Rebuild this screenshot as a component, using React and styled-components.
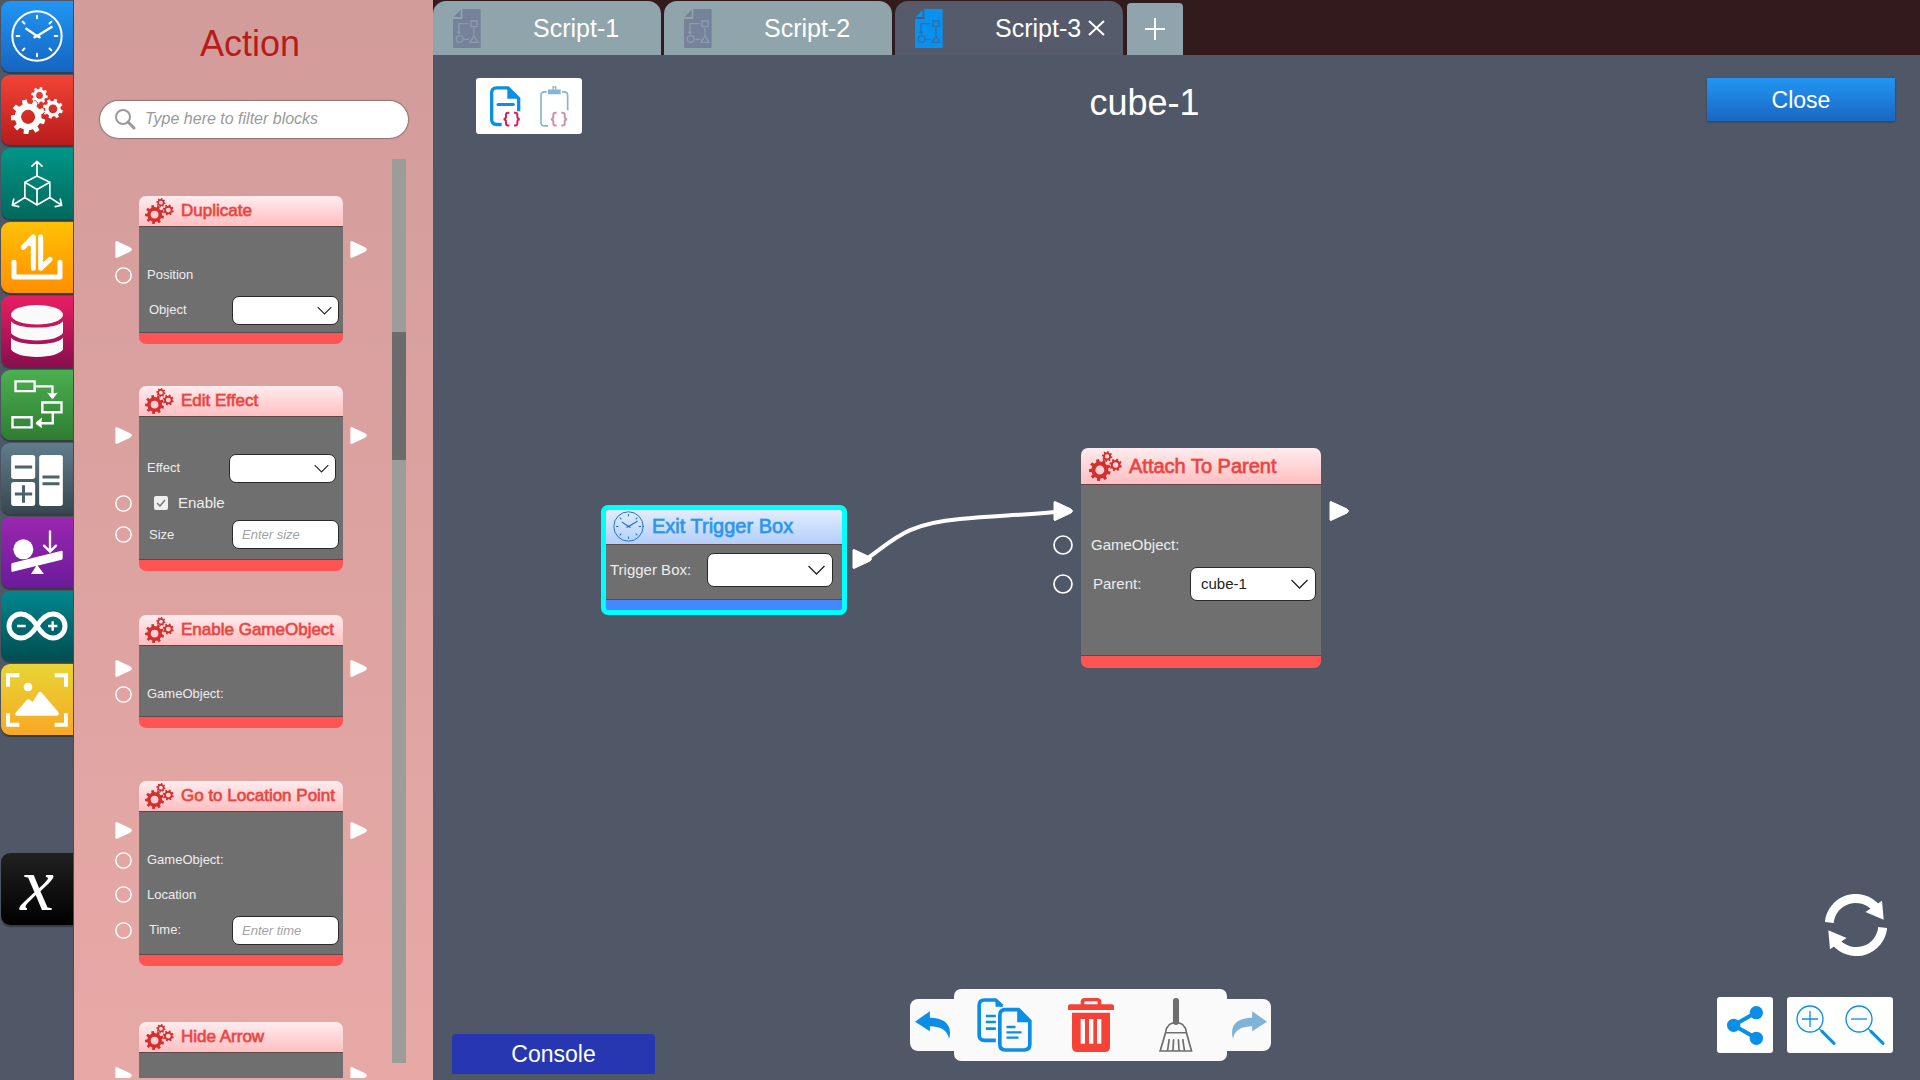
import React from 'react';
import styled, { createGlobalStyle, css } from 'styled-components';

const GlobalStyle = createGlobalStyle`
    * {
        box-sizing: border-box;
    }

    body {
        margin: 0;
        background: #505766;
        font-family: "Liberation Sans", Arial, sans-serif;
        color: #fff;
    }

    button, input, select {
        font-family: inherit;
        margin: 0;
    }

    button {
        border: 0;
        padding: 0;
        background: none;
        color: inherit;
        cursor: pointer;
    }

    svg {
        display: block;
        flex: none;
    }
`;

const Shell = styled.div`
    display: flex;
    height: 100vh;
    overflow: hidden;
`;

/* category rail */

const Rail = styled.nav`
    width: 74px;
    flex: none;
    padding: 1px 0 0 1px;
    border-right: 1px solid #4d4a57;
`;
const RailGroup = styled.div`
    display: flex;
    flex-direction: column;
    gap: 3px;
    height: 734px;
`;
const RailButton = styled.button`
    flex: 1;
    width: 100%;
    min-height: 0;
    display: flex;
    align-items: center;
    justify-content: center;
    border-radius: 9px 0 0 9px;
    background: linear-gradient(${({ $from, $to }) => `${$from}, ${$to}`});
    box-shadow: 0 2px 1px #363b47;
`;
const VariableButton = styled(RailButton)`
    height: 72px;
    margin-top: 118px;
    font: italic 76px/48px "Liberation Serif", serif;
    padding-bottom: 10px;
`;

/* block library */

const Panel = styled.aside`
    width: 359px;
    flex: none;
    display: flex;
    flex-direction: column;
    background: linear-gradient(#d29c9b, #e7a9a6);
`;
const PanelTitle = styled.h1`
    margin: 0;
    padding: 0 31px 0 24px;
    font-size: 36px;
    font-weight: 400;
    line-height: 88px;
    text-align: center;
    color: #b71c1c;
`;
const Search = styled.label`
    display: flex;
    align-items: center;
    gap: 9px;
    height: 37px;
    margin: 13px 25px 21px 26px;
    padding: 0 15px;
    border-radius: 19px;
    background: #fff;
    box-shadow: 0 0 1px 1px #8d7474;
`;
const SearchInput = styled.input`
    flex: 1;
    min-width: 0;
    border: 0;
    padding: 0 0 2px;
    outline: 0;
    background: none;
    font-size: 16px;

    &::placeholder {
        color: #9a9a9a;
        font-style: italic;
    }
`;
const LibraryArea = styled.div`
    flex: 1;
    min-height: 0;
    display: flex;
    margin-bottom: 2px;
`;
const BlockList = styled.div`
    width: 318px;
    padding: 37px 0 0 65px;
    overflow: hidden;
`;
const ScrollTrack = styled.div`
    width: 14px;
    margin-bottom: 15px;
    padding-top: 173px;
    background: #9c9c9b;
`;
const ScrollThumb = styled.div`
    height: 128px;
    background: #6b6b6b;
`;

/* blocks */

const small = css`
    --width: 204px;
    --header: 31px;
    --foot: 12px;
    --title: 17px;
    --icon: 29px;
    --inset: 6px;
    --label: 13px;
    --port: 17px;
    --slot: 24px;
    --field-width: 107px;
    --field-height: 29px;
    --field-pad: 9px;
    --chevron: 17px;
`;
const large = css`
    --width: 240px;
    --header: 37px;
    --foot: 13px;
    --title: 20px;
    --icon: 33px;
    --inset: 8px;
    --label: 15px;
    --port: 20px;
    --slot: 28px;
    --field-width: 126px;
    --field-height: 34px;
    --field-pad: 10px;
    --chevron: 19px;
`;
const BlockCard = styled.section`
    ${({ $large }) => ($large ? large : small)}
    width: var(--width);
    margin-bottom: ${({ $gap }) => $gap || 0}px;
    ${({ $selected }) => $selected && css`
        outline: 5px solid #00ffff;
        outline-offset: -2px;
        border-radius: 4px;
    `}
`;
const BlockHeader = styled.header`
    display: flex;
    align-items: center;
    gap: 7px;
    height: var(--header);
    padding-left: var(--inset);
    border-radius: 7px 7px 0 0;
    border-bottom: 1px solid #5a4a4a;
    background: ${({ $tone }) =>
        $tone === 'blue' ? 'linear-gradient(#e4effe, #b4cffb)' : 'linear-gradient(#ffecee, #ffbfc1)'};
    color: ${({ $tone }) => ($tone === 'blue' ? '#2b95ee' : '#ea4440')};
`;
const IconSlot = styled.span`
    width: var(--icon);
    display: flex;
    justify-content: center;
`;
const BlockTitle = styled.h2`
    margin: 0;
    font-size: var(--title);
    font-weight: 400;
    line-height: 24px;
    white-space: nowrap;
    -webkit-text-stroke: 1px ${({ $tone }) =>
        $tone === 'blue' ? 'rgba(43, 149, 238, 0.7)' : 'rgba(234, 68, 64, 0.7)'};
`;
const BlockBody = styled.div`
    padding: ${({ $top }) => $top}px 0 ${({ $bottom }) => $bottom}px;
    background: #6f6f6f;
`;
const BlockFoot = styled.div`
    height: var(--foot);
    border-top: 1px solid #5a4a4a;
    border-radius: 0 0 7px 7px;
    background: ${({ $tone }) => ($tone === 'blue' ? '#4488ff' : '#ff5454')};
`;
const Row = styled.div`
    display: flex;
    align-items: center;
    height: ${({ $height }) => $height}px;
    margin: 0 calc(var(--slot) * -1);
`;
const Slot = styled.span`
    width: var(--slot);
    flex: none;
    display: flex;
    justify-content: ${({ $out }) => ($out ? 'flex-end' : 'flex-start')};
    margin-left: ${({ $out }) => ($out ? 'auto' : '0')};
    align-self: ${({ $raised }) => ($raised ? 'flex-start' : 'center')};
    padding-top: ${({ $raised }) => ($raised ? '4px' : '0')};
`;
const PortSvg = styled.svg`
    width: var(--port);
    height: var(--port);
`;
const Label = styled.label`
    padding-left: ${({ $indent }) => $indent || 8}px;
    font-size: var(--label);
    line-height: 18px;
    color: #ededed;
    white-space: nowrap;
`;
const Field = styled.span`
    position: relative;
    width: var(--field-width);
    height: var(--field-height);
    margin-left: auto;
    margin-right: ${({ $end }) => $end || 4}px;

    & + ${Slot} {
        margin-left: 0;
    }
`;
const fieldBox = css`
    display: block;
    width: 100%;
    height: 100%;
    padding: 0 var(--field-pad);
    border: 1px solid #2a2a2a;
    border-radius: 7px;
    outline: 0;
    background: #fff;
    color: #222;
    font-size: var(--label);
`;
const Select = styled.select`
    ${fieldBox}
    appearance: none;
`;
const TextInput = styled.input`
    ${fieldBox}

    &::placeholder {
        color: #a2a2a2;
        font-style: italic;
    }
`;
const Chevron = styled.svg`
    position: absolute;
    right: calc(var(--field-pad) - 3px);
    top: 0;
    height: 100%;
    width: var(--chevron);
    pointer-events: none;
`;
const CheckLabel = styled.label`
    position: relative;
    display: flex;
    align-items: center;
    gap: 10px;
    padding-left: 15px;
    font-size: 15px;
    line-height: 18px;
    color: #ededed;

    svg {
        position: absolute;
        left: 17px;
    }
`;
const Checkbox = styled.input`
    appearance: none;
    width: 14px;
    height: 14px;
    border-radius: 2px;
    background: #efefef;
`;

/* workspace */

const Workspace = styled.main`
    flex: 1;
    min-width: 0;
    display: flex;
    flex-direction: column;
`;
const TabBar = styled.div`
    display: flex;
    align-items: flex-end;
    gap: 3px;
    height: 55px;
    flex: none;
    background: #331b1d;
`;
const Tab = styled.div`
    display: flex;
    align-items: center;
    width: 228px;
    height: 54px;
    padding: 0 18px 0 20px;
    border-radius: 13px 13px 0 0;
    background: ${({ $active }) => ($active ? '#555b6b' : '#90a4ab')};
`;
const TabName = styled.button`
    margin: 0 auto 0 52px;
    font-size: 25px;
    line-height: 28px;
`;
const AddTab = styled.button`
    display: flex;
    align-items: center;
    justify-content: center;
    width: 56px;
    height: 52px;
    margin-left: 1px;
    border-radius: 4px 4px 0 0;
    background: #90a4ae;
`;
const Canvas = styled.div`
    position: relative;
    flex: 1;
    display: flex;
    flex-direction: column;
    justify-content: space-between;
    background: #505766;
`;
const NodeLayer = styled.div`
    position: absolute;
    inset: 0;
`;
const NodeSpot = styled.div`
    position: absolute;
    left: ${({ $x }) => $x}px;
    top: ${({ $y }) => $y}px;
`;
const Wires = styled.svg`
    position: absolute;
    inset: 0;
    width: 100%;
    height: 100%;
`;
const TopRow = styled.div`
    position: relative;
    display: flex;
    align-items: flex-start;
    justify-content: space-between;
    padding: 23px 25px 0 43px;
`;
const IconBox = styled.div`
    display: flex;
    align-items: center;
    justify-content: space-around;
    width: ${({ $width }) => $width}px;
    height: 56px;
    padding: 0 4px;
    border-radius: 3px;
    background: #fff;
`;
const ScriptTitle = styled.h2`
    margin: 0;
    font-size: 36px;
    font-weight: 400;
    line-height: 50px;
`;
const CloseButton = styled.button`
    width: 188px;
    height: 43px;
    padding-top: 2px;
    background: linear-gradient(#2196f3, #1a67c2);
    box-shadow: 0 1px 2px #27415f;
    font-size: 23px;
`;
const BottomRow = styled.div`
    position: relative;
    display: flex;
    align-items: flex-end;
    padding: 0 27px 0 19px;
`;
const ConsoleButton = styled.button`
    width: 203px;
    height: 40px;
    margin-bottom: 6px;
    border-radius: 4px 4px 0 0;
    background: #2736b1;
    font-size: 23px;
`;
const EditBar = styled.div`
    display: flex;
    align-items: center;
    margin: 0 auto 19px 255px;
`;
const EditMain = styled.div`
    display: flex;
    width: 273px;
    height: 72px;
    padding: 0 8px;
    border-radius: 7px;
    background: #fafafa;
`;
const EditButton = styled.button`
    flex: 1;
    display: flex;
    align-items: center;
    justify-content: center;
`;
const EditSide = styled.button`
    display: flex;
    align-items: center;
    justify-content: center;
    width: 44px;
    height: 52px;
    border-radius: ${({ $right }) => ($right ? '0 8px 8px 0' : '8px 0 0 8px')};
    background: #fafafa;
`;
const ViewTools = styled.div`
    display: flex;
    flex-direction: column;
    align-items: flex-end;
    gap: 41px;
    margin-bottom: 27px;
`;
const SyncButton = styled.button`
    margin-right: 6px;
`;
const ViewBoxes = styled.div`
    display: flex;
    gap: 14px;
`;

/* icons */

const gearPath = (cx, cy, r, teeth, hole, turn = 0) => {
    const step = (Math.PI * 2) / teeth;
    const root = r * 0.77;
    const at = (radius, angle) =>
        `${(cx + radius * Math.cos(angle)).toFixed(1)} ${(cy + radius * Math.sin(angle)).toFixed(1)}`;
    let d = '';
    for (let i = 0; i < teeth; i++) {
        const a = turn + i * step;
        d += `${i ? 'L' : 'M'}${at(root, a - step * 0.28)}L${at(r, a - step * 0.2)}L${at(r, a + step * 0.2)}L${at(root, a + step * 0.28)}`;
    }
    return `${d}ZM${cx - hole} ${cy}a${hole} ${hole} 0 1 0 ${hole * 2} 0a${hole} ${hole} 0 1 0 ${-hole * 2} 0Z`;
};
const gears = [
    gearPath(51, 89, 52, 9, 21, 0.3),
    gearPath(85, 25, 25, 8, 10, 0.2),
    gearPath(125, 65, 30, 8, 13, 0.3),
].join('');

const GearsIcon = ({ width, color = '#fff' }) => (
    <svg width={width} height={Math.round(width * 0.9)} viewBox="0 0 155 140">
        <path d={gears} fill={color} fillRule="evenodd" />
    </svg>
);

const ClockIcon = ({ size, color = '#fff', weight = 6 }) => (
    <svg width={size} height={size} viewBox="0 0 156 156" fill="none" stroke={color} strokeWidth={weight} strokeLinecap="round">
        <circle cx="78" cy="78" r="74" />
        {[0, 45, 90, 135, 180, 225, 270, 315].map((a) => (
            <path key={a} d="M78 17v8" transform={`rotate(${a} 78 78)`} />
        ))}
        <path d="M46 56l32 22 44-27M70 82l8-4 8 4" strokeWidth={weight + 1} />
    </svg>
);

const AxesIcon = () => (
    <svg width="52" height="48" viewBox="0 0 154 142" fill="none" stroke="#fff" strokeWidth="5" strokeLinecap="round" strokeLinejoin="round">
        <path d="M77 47l38 19v45l-38 22-36-22V66zM41 66l36 21 38-21M77 87v46M77 47V4M62 18L77 4l15 14M41 111L4 134M8 116l-4 18 19 4M115 111l35 23M146 116l4 18-19 4" />
    </svg>
);
const TransferIcon = () => (
    <svg width="52" height="46" viewBox="0 0 156 138" fill="none" stroke="#fff" strokeWidth="15" strokeLinecap="round" strokeLinejoin="round">
        <path d="M9 85v44h138V85" />
        <path d="M37 40L67 9v94M89 9v94l28-27" />
        <path d="M56 22v10l8 0" strokeWidth="8" />
    </svg>
);
const DatabaseIcon = () => (
    <svg width="52" height="52" viewBox="0 0 154 154" fill="#fafafa">
        <ellipse cx="77" cy="29" rx="77" ry="29" />
        <path d="M0 48q16 18 77 19 61-1 77-19v35q-16 21-77 22-61-1-77-22z" />
        <path d="M0 97q16 18 77 19 61-1 77-19v35q-16 21-77 22-61-1-77-22z" />
    </svg>
);
const FlowIcon = () => (
    <svg width="52" height="49" viewBox="0 0 154 146">
        <g fill="none" stroke="#fff" strokeWidth="7">
            <path d="M13 4h57v29H13zM93 67h57v29H93zM4 111h57v30H4zM70 19h53v26M124 98v31H82" />
        </g>
        <path d="M107 37q16 6 32 0l-14 19h-4zM92 112q-4 16 0 32l-18-13v-5z" fill="#fff" />
    </svg>
);
const CalcIcon = () => (
    <svg width="52" height="55" viewBox="0 -12 155 165">
        <g fill="#fff">
            <rect width="72" height="72" rx="8" />
            <rect y="81" width="72" height="72" rx="8" />
            <rect x="84" width="71" height="153" rx="8" />
        </g>
        <path d="M11 36h52M94 66h51M94 86h51M11 117h52M37 91v52" stroke="#4c626d" strokeWidth="9" />
    </svg>
);
const BalanceIcon = () => (
    <svg width="52" height="44" viewBox="0 0 154 132" fill="#fff">
        <circle cx="36" cy="58" r="30" />
        <path d="M3 99L151 62q3 0 3 3v20q0 3-3 4L4 125q-4 1-4-3v-19q0-3 3-4zM77 104l21 28H59z" />
        <path d="M116 4v58M98 47l18 18 18-18" fill="none" stroke="#fff" strokeWidth="7" strokeLinecap="round" />
    </svg>
);
const InfinityIcon = () => (
    <svg width="62" height="30" viewBox="0 0 186 90" fill="none" stroke="#fff" strokeWidth="15">
        <path d="M93 45C80 24 66 9 45 9a36 36 0 0 0 0 72c21 0 35-15 48-36s27-36 48-36a36 36 0 0 1 0 72c-21 0-35-15-48-36z" />
        <path d="M33 45h26M126 45h28M140 31v28" strokeWidth="7" />
    </svg>
);
const PictureIcon = () => (
    <svg width="62" height="54" viewBox="0 0 186 160" fill="#fff">
        <path d="M6 40V6h34M146 6h34v34M6 120v34h34M146 154h34v-34" fill="none" stroke="#fff" strokeWidth="12" />
        <circle cx="66" cy="41" r="13" />
        <path d="M29 118l33-38q5-5 11 0l7 6 17-27q5-7 11 0l49 57q5 10-5 11H34q-10-1-5-9z" />
    </svg>
);
const SearchIcon = () => (
    <svg width="21" height="21" viewBox="0 0 21 21" fill="none" stroke="#9a9a9a">
        <circle cx="8" cy="8" r="7" strokeWidth="2" />
        <path d="M13 13l6 6" strokeWidth="3" strokeLinecap="round" />
    </svg>
);
const ArrowPort = () => (
    <PortSvg viewBox="0 0 20 20">
        <path d="M1 1q0-1 2 0l15 7q3 2 0 4L3 19q-2 1-2 0z" fill="#fff" stroke="#fff" />
    </PortSvg>
);
const DataPort = () => (
    <PortSvg viewBox="0 0 20 20">
        <circle cx="10" cy="10" r="9" fill="none" stroke="#fff" strokeWidth="1.7" />
    </PortSvg>
);
const ScriptIcon = ({ color, line }) => (
    <svg width="28" height="39" viewBox="0 0 84 117">
        <path d="M28 0h52q3 0 3 3v111q0 3-3 3H4q-4 0-4-4V30h28zM23 2v22H2z" fill={color} />
        <g fill="none" stroke={line} strokeWidth="4">
            <path d="M18 74V44h28M54 36h18v17H54zM63 56v20M34 91h14" />
            <circle cx="20" cy="90" r="10" />
            <path d="M63 80l12 20H51z" />
            <path d="M12 68h12l-6 8z" fill={line} strokeWidth="1" />
        </g>
    </svg>
);
const CrossIcon = () => (
    <svg width="17" height="16" viewBox="0 0 17 16" stroke="#fff" strokeWidth="2">
        <path d="M1 1l15 14M16 1L1 15" />
    </svg>
);
const PlusIcon = () => (
    <svg width="20" height="22" viewBox="0 0 20 22" stroke="#fff" strokeWidth="2">
        <path d="M0 11h20M10 0v22" />
    </svg>
);
const Braces = ({ x, color }) => (
    <path
        transform={`translate(${x} 78)`}
        d="M20 2h-4q-6 0-6 6v5q0 7-7 8 7 1 7 8v5q0 6 6 6h4M34 2h4q6 0 6 6v5q0 7 7 8-7 1-7 8v5q0 6-6 6h-4"
        fill="none"
        stroke={color}
        strokeWidth="6"
    />
);
const CopyCodeIcon = () => (
    <svg width="31" height="41" viewBox="0 0 93 122">
        <path d="M35 115H20Q5 115 5 100V20Q5 5 20 5h34l32 32v38" fill="none" stroke="#0b8fe6" strokeWidth="10" />
        <path d="M52 3v35h37z" fill="#0b8fe6" />
        <path d="M24 55h46" stroke="#0b8fe6" strokeWidth="9" strokeLinecap="round" />
        <Braces x={38} color="#d81b60" />
    </svg>
);
const PasteCodeIcon = () => (
    <svg width="29" height="41" viewBox="0 0 87 122">
        <path d="M20 17h-6Q3 17 3 28v80q0 11 11 11h10M66 17h6q11 0 11 11v44" fill="none" stroke="#84b4d6" strokeWidth="5" />
        <path d="M24 10h13V0h12v10h13v14H24zM41 4v6h4V4z" fill="#84b4d6" fillRule="evenodd" />
        <Braces x={30} color="#d190a8" />
    </svg>
);
const UndoIcon = ({ color = '#0b8fe6', flip }) => (
    <svg width="35" height="28" viewBox="0 0 106 84">
        <path
            d="M0 32L45 0v20c38 0 61 16 61 45q0 10-3 19C98 58 80 47 45 46v15z"
            fill={color}
            transform={flip ? 'translate(106 0) scale(-1 1)' : undefined}
        />
    </svg>
);
const CopyIcon = () => (
    <svg width="55" height="54" viewBox="0 0 164 162">
        <g fill="none" stroke="#0b8fe6" strokeWidth="11">
            <path d="M56 127H22Q6 127 6 111V22Q6 6 22 6h33l20 18" />
            <path d="M26 54h30M26 72h30M26 92h30" strokeWidth="8" />
            <path d="M84 35h40l34 34v70q0 17-17 17H84q-16 0-16-17V52q0-17 16-17z" />
            <path d="M88 87h27M88 103h45M88 119h36" strokeWidth="7" />
        </g>
        <path d="M55 2v24h24zM120 33v40h40z" fill="#0b8fe6" />
    </svg>
);
const TrashIcon = () => (
    <svg width="46" height="54" viewBox="0 0 138 162">
        <path d="M0 24q0-5 6-5h32V10Q40 0 50 0h38q10 0 12 10v9h32q6 0 6 5v12H0zM49 19h40v-7q0-2-3-2H52q-3 0-3 2z" fill="#f44336" fillRule="evenodd" />
        <path d="M12 44h114v102q0 16-16 16H28q-16 0-16-16zM38 63v74h13V63zM63 63v74h13V63zM87 63v74h13V63z" fill="#f44336" fillRule="evenodd" />
    </svg>
);
const BroomIcon = () => (
    <svg width="34" height="54" viewBox="0 0 100 160" fill="none" stroke="#6e6e6e" strokeWidth="5">
        <path d="M50 9v62" strokeWidth="18" strokeLinecap="round" />
        <path d="M19 103q3-30 31-30t31 30l15 54H3zM18 103h64M30 122l-5 34M43 122l-2 34M57 122l2 34M70 122l5 34" />
    </svg>
);
const SyncIcon = () => (
    <svg width="62" height="62" viewBox="0 0 187 187">
        {[0, 180].map((turn) => (
            <g key={turn} transform={`rotate(${turn} 93.5 93.5)`}>
                <path d="M13 86A80 80 0 0 1 154 42" fill="none" stroke="#fff" strokeWidth="27" />
                <path d="M177 78l-5-58-50 34z" fill="#fff" />
            </g>
        ))}
    </svg>
);
const ShareIcon = () => (
    <svg width="36" height="39" viewBox="0 0 108 117" fill="#0b8fe6">
        <path d="M88 19L20 58l68 39" fill="none" stroke="#0b8fe6" strokeWidth="12" />
        <circle cx="88" cy="20" r="20" />
        <circle cx="20" cy="58" r="20" />
        <circle cx="88" cy="97" r="20" />
    </svg>
);
const ZoomIcon = ({ plus }) => (
    <svg width="40" height="40" viewBox="0 0 120 120" fill="none" stroke="#0b8fe6" strokeWidth="4">
        <circle cx="42" cy="42" r="39" />
        <path d={plus ? 'M18 42h48M42 18v48' : 'M18 42h48'} />
        <path d="M70 71l11 12" />
        <path d="M78 79l36 36" strokeWidth="9" strokeLinecap="round" />
    </svg>
);

/* block parts */

const ExecRow = () => (
    <Row $height={26}>
        <Slot><ArrowPort /></Slot>
        <Slot $out><ArrowPort /></Slot>
    </Row>
);

const SelectField = ({ id, end, options = [''] }) => (
    <Field $end={end}>
        <Select id={id}>
            {options.map((o) => <option key={o}>{o}</option>)}
        </Select>
        <Chevron viewBox="0 0 18 34" fill="none" stroke="#222" strokeWidth="1.3">
            <path d="M1 13l8 8 8-8" />
        </Chevron>
    </Field>
);

const PortRow = ({ height, label, id, indent, port = true, children }) => (
    <Row $height={height}>
        <Slot>{port && <DataPort />}</Slot>
        {label && <Label as={id ? 'label' : 'span'} htmlFor={id} $indent={indent}>{label}</Label>}
        {children}
        <Slot $out />
    </Row>
);

const Block = ({ title, tone = 'red', isLarge, gap, selected, top, bottom, children }) => (
    <BlockCard $large={isLarge} $gap={gap} $selected={selected}>
        <BlockHeader $tone={tone}>
            <IconSlot>
                {tone === 'blue'
                    ? <ClockIcon size={31} color="#1f73c9" weight={5} />
                    : <GearsIcon width={isLarge ? 33 : 29} color="#d32f2f" />}
            </IconSlot>
            <BlockTitle $tone={tone}>{title}</BlockTitle>
        </BlockHeader>
        <BlockBody $top={top} $bottom={bottom}>{children}</BlockBody>
        <BlockFoot $tone={tone} />
    </BlockCard>
);

const categories = [
    { name: 'Event', from: '#2196f3', to: '#1565c0', icon: <ClockIcon size={52} /> },
    { name: 'Action', from: '#f44336', to: '#b71c1c', icon: <GearsIcon width={52} /> },
    { name: 'Transform', from: '#009688', to: '#00695c', icon: <AxesIcon /> },
    { name: 'Input and output', from: '#ffc107', to: '#ff8f00', icon: <TransferIcon /> },
    { name: 'Data', from: '#e91e63', to: '#880e4f', icon: <DatabaseIcon /> },
    { name: 'Flow', from: '#4caf50', to: '#2e7d32', icon: <FlowIcon /> },
    { name: 'Math', from: '#607d8b', to: '#37474f', icon: <CalcIcon /> },
    { name: 'Physics', from: '#9c27b0', to: '#6a1b9a', icon: <BalanceIcon /> },
    { name: 'Arduino', from: '#00878f', to: '#004d50', icon: <InfinityIcon /> },
    { name: 'Image', from: '#e6d634', to: '#f9a825', icon: <PictureIcon /> },
];

const tabs = ['Script-1', 'Script-2', 'Script-3'];

function Library() {
    return (
        <LibraryArea>
            <BlockList>
                <Block title="Duplicate" gap={42} top={9} bottom={0}>
                    <ExecRow />
                    <PortRow height={26} label="Position" />
                    <PortRow height={44} label="Object" id="object" indent={10} port={false}>
                        <SelectField id="object" />
                    </PortRow>
                </Block>
                <Block title="Edit Effect" gap={44} top={5} bottom={8}>
                    <ExecRow />
                    <PortRow height={40} label="Effect" id="effect" port={false}>
                        <SelectField id="effect" end={7} />
                    </PortRow>
                    <PortRow height={30}>
                        <CheckLabel>
                            <Checkbox type="checkbox" defaultChecked />
                            <svg width="10" height="8" viewBox="0 0 10 8" fill="none" stroke="#777" strokeWidth="1.5">
                                <path d="M1 4l3 3 5-6" />
                            </svg>
                            Enable
                        </CheckLabel>
                    </PortRow>
                    <PortRow height={33} label="Size" id="size" indent={10}>
                        <Field><TextInput id="size" placeholder="Enter size" /></Field>
                    </PortRow>
                </Block>
                <Block title="Enable GameObject" gap={53} top={9} bottom={9}>
                    <ExecRow />
                    <PortRow height={26} label="GameObject:" />
                </Block>
                <Block title="Go to Location Point" gap={56} top={5} bottom={6}>
                    <ExecRow />
                    <PortRow height={34} label="GameObject:" />
                    <PortRow height={35} label="Location" />
                    <PortRow height={36} label="Time:" id="time" indent={10}>
                        <Field><TextInput id="time" placeholder="Enter time" /></Field>
                    </PortRow>
                </Block>
                <Block title="Hide Arrow" top={9} bottom={35}>
                    <ExecRow />
                </Block>
            </BlockList>
            <ScrollTrack>
                <ScrollThumb />
            </ScrollTrack>
        </LibraryArea>
    );
}

function Nodes() {
    return (
        <NodeLayer>
            <Wires>
                <path d="M432 505C462 484 472 469 527 464 560 461 590 460 622 457" fill="none" stroke="#fff" strokeWidth="4" />
            </Wires>
            <NodeSpot $x={171} $y={453}>
                <Block title="Exit Trigger Box" tone="blue" isLarge selected top={0} bottom={4}>
                    <Row $height={50}>
                        <Slot />
                        <Label htmlFor="trigger" $indent={6}>Trigger Box:</Label>
                        <SelectField id="trigger" end={11} />
                        <Slot $out $raised><ArrowPort /></Slot>
                    </Row>
                </Block>
            </NodeSpot>
            <NodeSpot $x={648} $y={393}>
                <Block title="Attach To Parent" isLarge top={13} bottom={53}>
                    <ExecRow />
                    <PortRow height={41} label="GameObject:" indent={10} />
                    <PortRow height={37} label="Parent:" id="parent" indent={12}>
                        <SelectField id="parent" end={5} options={['cube-1']} />
                    </PortRow>
                </Block>
            </NodeSpot>
        </NodeLayer>
    );
}

function App() {
    return (
        <>
            <GlobalStyle />
            <Shell>
                <Rail>
                    <RailGroup>
                        {categories.map((c) => (
                            <RailButton key={c.name} $from={c.from} $to={c.to} aria-label={c.name}>
                                {c.icon}
                            </RailButton>
                        ))}
                    </RailGroup>
                    <VariableButton $from="#212121" $to="#000">x</VariableButton>
                </Rail>
                <Panel>
                    <PanelTitle>Action</PanelTitle>
                    <Search>
                        <SearchIcon />
                        <SearchInput placeholder="Type here to filter blocks" />
                    </Search>
                    <Library />
                </Panel>
                <Workspace>
                    <TabBar>
                        {tabs.map((name, i) => (
                            <Tab key={name} $active={i === 2}>
                                <ScriptIcon color={i === 2 ? '#0a90ee' : '#76829a'} line={i === 2 ? '#2c6fa8' : '#8b9dab'} />
                                <TabName>{name}</TabName>
                                {i === 2 && <button aria-label="Close tab"><CrossIcon /></button>}
                            </Tab>
                        ))}
                        <AddTab aria-label="New tab"><PlusIcon /></AddTab>
                    </TabBar>
                    <Canvas>
                        <Nodes />
                        <TopRow>
                            <IconBox $width={106}>
                                <button aria-label="Copy code"><CopyCodeIcon /></button>
                                <button aria-label="Paste code"><PasteCodeIcon /></button>
                            </IconBox>
                            <ScriptTitle>cube-1</ScriptTitle>
                            <CloseButton>Close</CloseButton>
                        </TopRow>
                        <BottomRow>
                            <ConsoleButton>Console</ConsoleButton>
                            <EditBar>
                                <EditSide aria-label="Undo"><UndoIcon /></EditSide>
                                <EditMain>
                                    <EditButton aria-label="Duplicate"><CopyIcon /></EditButton>
                                    <EditButton aria-label="Delete"><TrashIcon /></EditButton>
                                    <EditButton aria-label="Clean up"><BroomIcon /></EditButton>
                                </EditMain>
                                <EditSide $right aria-label="Redo"><UndoIcon flip color="#7fb3d8" /></EditSide>
                            </EditBar>
                            <ViewTools>
                                <SyncButton aria-label="Reset view"><SyncIcon /></SyncButton>
                                <ViewBoxes>
                                    <IconBox $width={56}>
                                        <button aria-label="Share"><ShareIcon /></button>
                                    </IconBox>
                                    <IconBox $width={106}>
                                        <button aria-label="Zoom in"><ZoomIcon plus /></button>
                                        <button aria-label="Zoom out"><ZoomIcon /></button>
                                    </IconBox>
                                </ViewBoxes>
                            </ViewTools>
                        </BottomRow>
                    </Canvas>
                </Workspace>
            </Shell>
        </>
    );
}

export default App;
